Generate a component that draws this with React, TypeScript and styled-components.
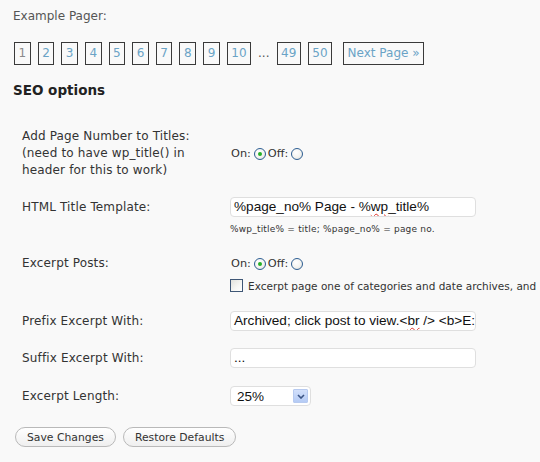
import React from "react";
import styled, { createGlobalStyle } from "styled-components";

const GlobalStyle = createGlobalStyle`
  html, body {
    margin: 0;
    padding: 0;
    background: #f9f9f9;
  }
  body {
    font-family: "DejaVu Sans", Verdana, sans-serif;
    color: #333;
  }
`;

const Page = styled.div`
  width: 540px;
  height: 462px;
  box-sizing: border-box;
  padding: 8px 0 0 13px;
  overflow: hidden;
`;

const PagerTitle = styled.div`
  font-size: 12px;
  line-height: 17px;
  color: #555;
`;

const Pager = styled.div`
  display: flex;
  align-items: center;
  gap: 7px;
  margin: 17px 0 0 1px;
  font-size: 12px;
`;

const PageLink = styled.a<{ $current?: boolean; $next?: boolean }>`
  display: block;
  border: 1px solid #3a3a3a;
  padding: 3px 3.5px;
  line-height: 15px;
  color: ${(p) => (p.$current ? "#8a8a8a" : "#6aa3c6")};
  text-decoration: none;
  margin-left: ${(p) => (p.$next ? "4px" : "0")};
`;

const Dots = styled.span`
  line-height: 15px;
  color: #555;
`;

const Heading = styled.h3`
  margin: 17px 0 0;
  font-size: 13.5px;
  line-height: 17px;
  font-weight: bold;
  color: #222;
`;

const Table = styled.div`
  margin-top: 29px;
  padding-left: 9px;
`;

const Row = styled.div<{ $top?: boolean; $gap?: number }>`
  display: grid;
  grid-template-columns: 208px auto;
  align-items: ${(p) => (p.$top ? "start" : "center")};
  margin-top: ${(p) => p.$gap ?? 0}px;
`;

const Label = styled.div<{ $pad?: number }>`
  font-size: 12px;
  line-height: 17px;
  letter-spacing: 0.15px;
  color: #333;
  padding-top: ${(p) => p.$pad ?? 0}px;
`;

const Field = styled.div`
  display: flex;
  flex-direction: column;
  align-items: flex-start;
  min-width: 0;
`;

const RadioLine = styled.div`
  display: flex;
  align-items: center;
  height: 17px;
  font-size: 11.3px;
  color: #333;
  padding-left: 1px;
`;

const RadioText = styled.span`
  margin-right: 3px;
`;

const Radio = styled.span<{ $checked?: boolean }>`
  position: relative;
  width: 12px;
  height: 12px;
  box-sizing: border-box;
  border-radius: 50%;
  border: 1px solid #2c5d92;
  background: radial-gradient(circle at 40% 35%, #ffffff 0%, #f3f3f0 55%, #d8d8d2 100%);
  margin-right: 2px;

  &::after {
    content: "";
    display: ${(p) => (p.$checked ? "block" : "none")};
    position: absolute;
    left: 3px;
    top: 3px;
    width: 4px;
    height: 4px;
    border-radius: 50%;
    background: #25b027;
  }
`;

const CheckLine = styled.label`
  display: flex;
  align-items: center;
  height: 17px;
  margin-top: 5px;
  font-size: 10.5px;
  color: #333;
  white-space: nowrap;
`;

const Checkbox = styled.span`
  width: 13px;
  height: 13px;
  box-sizing: border-box;
  border: 1px solid #3f5776;
  background: linear-gradient(135deg, #e2e2dc 0%, #f7f7f4 60%, #ffffff 100%);
  margin-right: 5px;
  flex: none;
`;

const TextBox = styled.div`
  width: 246px;
  height: 20px;
  box-sizing: border-box;
  border: 1px solid #dfdfdf;
  border-radius: 4px;
  background: #fff;
  padding: 0 3px;
  font-family: "Liberation Sans", Arial, sans-serif;
  font-size: 13.6px;
  line-height: 18px;
  color: #111;
  white-space: nowrap;
  overflow: hidden;
`;

const Misspelled = styled.span`
  text-decoration: underline wavy #e0342c;
  text-decoration-thickness: 1px;
  text-underline-offset: 2px;
`;

const Hint = styled.div`
  margin-top: 6px;
  font-size: 9px;
  line-height: 12px;
  letter-spacing: 0.2px;
  color: #333;
`;

const SelectBox = styled.div`
  display: flex;
  align-items: center;
  justify-content: space-between;
  width: 81px;
  height: 20px;
  box-sizing: border-box;
  border: 1px solid #dfdfdf;
  border-radius: 4px;
  background: #fff;
  padding: 0 2px 0 6px;
  font-family: "Liberation Sans", Arial, sans-serif;
  font-size: 13.5px;
  color: #111;
`;

const ArrowButton = styled.span`
  display: flex;
  align-items: center;
  justify-content: center;
  width: 15px;
  height: 14px;
  box-sizing: border-box;
  border: 1px solid #b7caf0;
  border-radius: 1px;
  background: linear-gradient(#d3e0fb, #b5cbf5);
`;

const Actions = styled.div`
  display: flex;
  gap: 7px;
  margin: 21px 0 0 2px;
`;

const Button = styled.button`
  height: 20px;
  padding: 0 11px;
  border: 1px solid #b9b9b9;
  border-radius: 11px;
  background: linear-gradient(#ffffff, #efefef);
  font-family: "DejaVu Sans", Verdana, sans-serif;
  font-size: 10.8px;
  color: #333;
  cursor: pointer;
`;

const pages = ["2", "3", "4", "5", "6", "7", "8", "9", "10"];

const OnOff = () => (
  <RadioLine>
    <RadioText>On:</RadioText>
    <Radio $checked />
    <RadioText>Off:</RadioText>
    <Radio />
  </RadioLine>
);

export default function App() {
  return (
    <>
      <GlobalStyle />
      <Page>
        <PagerTitle>Example Pager:</PagerTitle>
        <Pager>
          <PageLink $current>1</PageLink>
          {pages.map((n) => (
            <PageLink key={n} href="#">
              {n}
            </PageLink>
          ))}
          <Dots>...</Dots>
          <PageLink href="#">49</PageLink>
          <PageLink href="#">50</PageLink>
          <PageLink href="#" $next>
            Next Page »
          </PageLink>
        </Pager>

        <Heading>SEO options</Heading>

        <Table>
          <Row>
            <Label>
              Add Page Number to Titles:
              <br />
              (need to have wp_title() in
              <br />
              header for this to work)
            </Label>
            <Field>
              <OnOff />
            </Field>
          </Row>

          <Row $top $gap={18}>
            <Label $pad={2}>HTML Title Template:</Label>
            <Field>
              <TextBox>
                %page_no% Page - %<Misspelled>wp</Misspelled>_title%
              </TextBox>
              <Hint>%wp_title% = title; %page_no% = page no.</Hint>
            </Field>
          </Row>

          <Row $top $gap={20}>
            <Label>Excerpt Posts:</Label>
            <Field>
              <OnOff />
              <CheckLine>
                <Checkbox />
                Excerpt page one of categories and date archives, and
              </CheckLine>
            </Field>
          </Row>

          <Row $gap={17}>
            <Label>Prefix Excerpt With:</Label>
            <Field>
              <TextBox>
                Archived; click post to view.&lt;<Misspelled>br</Misspelled> /&gt; &lt;b&gt;E:
              </TextBox>
            </Field>
          </Row>

          <Row $gap={17}>
            <Label>Suffix Excerpt With:</Label>
            <Field>
              <TextBox>...</TextBox>
            </Field>
          </Row>

          <Row $gap={18}>
            <Label>Excerpt Length:</Label>
            <Field>
              <SelectBox>
                <span>25%</span>
                <ArrowButton>
                  <svg width="8" height="5" viewBox="0 0 8 5">
                    <path d="M1 1 L4 4 L7 1" fill="none" stroke="#3c5585" strokeWidth="1.6" />
                  </svg>
                </ArrowButton>
              </SelectBox>
            </Field>
          </Row>
        </Table>

        <Actions>
          <Button>Save Changes</Button>
          <Button>Restore Defaults</Button>
        </Actions>
      </Page>
    </>
  );
}
